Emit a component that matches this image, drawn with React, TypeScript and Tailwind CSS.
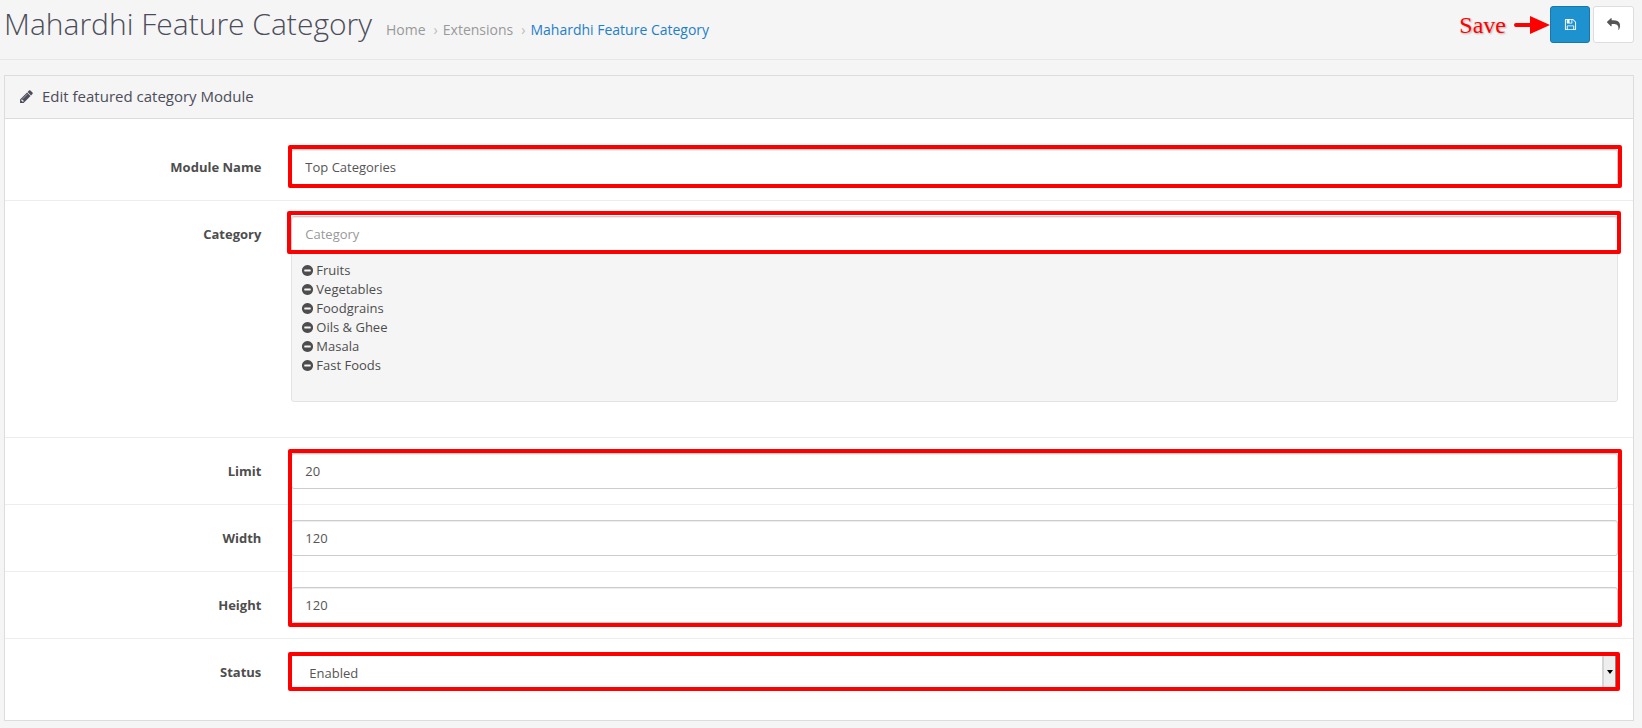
import type { ReactNode } from "react";

const PATHS = {
  save: "M512 1536h768v-384h-768v384zm896 0h128v-896q0-14-10-38.5t-20-34.5l-281-281q-10-10-34-20t-39-10v416q0 40-28 68t-68 28h-576q-40 0-68-28t-28-68v-416h-128v1280h128v-416q0-40 28-68t68-28h832q40 0 68 28t28 68v416zm-384-928v-320q0-13-9.5-22.5t-22.5-9.5h-192q-13 0-22.5 9.5t-9.5 22.5v320q0 13 9.5 22.5t22.5 9.5h192q13 0 22.5-9.5t9.5-22.5zm640 32v928q0 40-28 68t-68 28h-1344q-40 0-68-28t-28-68v-1344q0-40 28-68t68-28h928q40 0 88 20t76 48l280 280q28 28 48 76t20 88z",
  reply:
    "M1792 1120q0 166-127 451-3 7-10.5 24t-13.5 30-13 22q-12 17-28 17-15 0-23.5-10t-8.5-25q0-9 2.5-26.5t2.5-23.5q5-68 5-123 0-112-19.5-200.5t-54-153.5-89-112-111.5-78-134.5-48.5-148-24.5-159.5-7h-224v256q0 26-19 45t-45 19-45-19l-512-512q-19-19-19-45t19-45l512-512q19-19 45-19t45 19 19 45v256h224q713 0 875 403 53 134 53 333z",
  pencil:
    "M491 1536l91-91-235-235-91 91v107h128v128h107zm523-928q0-22-22-22-10 0-17 7l-542 542q-7 7-7 17 0 22 22 22 10 0 17-7l542-542q7-7 7-17zm-54-192l416 416-832 832h-416v-416zm683 96q0 53-37 90l-166 166-416-416 166-165q36-38 90-38 53 0 91 38l235 234q37 39 37 91z",
  minus:
    "M1344 960v-128q0-26-19-45t-45-19h-768q-26 0-45 19t-19 45v128q0 26 19 45t45 19h768q26 0 45-19t19-45zm320-64q0 209-103 385.5t-279.5 279.5-385.5 103-385.5-103-279.5-279.5-103-385.5 103-385.5 279.5-279.5 385.5-103 385.5 103 279.5 279.5 103 385.5z",
};

function Icon({ name, className }: { name: keyof typeof PATHS; className: string }) {
  return (
    <svg viewBox="0 0 1792 1792" fill="currentColor" aria-hidden="true" className={className}>
      <path d={PATHS[name]} />
    </svg>
  );
}

const FIELD =
  "block h-9 w-full rounded-[3px] border border-[#ccc] bg-white px-[13px] text-[13px] text-[#555] shadow-[inset_0_1px_1px_rgba(0,0,0,0.075)] outline-none placeholder:text-[#999]";

function Row({ id, label, children }: { id: string; label: string; children: ReactNode }) {
  return (
    <div className="flex border-t border-[#ededed] py-[15px] first:border-t-0">
      <label
        htmlFor={id}
        className="w-1/6 shrink-0 px-[15px] pt-[9px] text-right text-[13px] leading-[19px] font-bold text-[#4d4d4d]"
      >
        {label}
      </label>
      <div className="min-w-0 flex-1 px-[15px]">
        <div className="relative">{children}</div>
      </div>
    </div>
  );
}

function Highlight({ className }: { className: string }) {
  return (
    <div
      className={`pointer-events-none absolute z-10 rounded-[2px] border-4 border-[#fe0000] ${className}`}
    />
  );
}

const categories = ["Fruits", "Vegetables", "Foodgrains", "Oils & Ghee", "Masala", "Fast Foods"];

export default function App() {
  return (
    <div className="min-h-screen bg-[#f5f5f5] font-['Open_Sans','Noto_Sans',sans-serif] text-[13px] text-[#4d4d4d]">
      <header className="flex h-[60px] items-start justify-between border-b border-[#e7e7e7] pr-2 pl-1">
        <div className="flex items-baseline gap-[14px]">
          <h1 className="pt-[2px] text-[30px] leading-[44px] font-light text-[#4c4d5a]">
            Mahardhi Feature Category
          </h1>
          <nav aria-label="Breadcrumb">
            <ol className="flex items-baseline gap-2 text-[14px] text-[#999]">
              <li>
                <a href="#home">Home</a>
              </li>
              <li className="flex items-baseline gap-[5px]">
                <span className="text-[#bbb]">›</span>
                <a href="#extensions">Extensions</a>
              </li>
              <li className="flex items-baseline gap-[5px]">
                <span className="text-[#bbb]">›</span>
                <a href="#module" className="text-[#1e7fc8]">
                  Mahardhi Feature Category
                </a>
              </li>
            </ol>
          </nav>
        </div>
        <div className="flex items-center pt-[6px]">
          <span className="mr-2 font-['Liberation_Serif',serif] text-[24px] leading-9 text-[#fe0000] [text-shadow:1px_1px_2px_rgba(0,0,0,0.3)]">
            Save
          </span>
          <svg viewBox="0 0 36 18" className="h-[18px] w-9" aria-hidden="true">
            <path d="M2 9h18" stroke="#fe0000" strokeWidth="4" strokeLinecap="round" />
            <path d="M16 0L36 9L16 18z" fill="#fe0000" />
          </svg>
          <button
            type="button"
            aria-label="Save"
            className="flex h-[37px] w-10 items-center justify-center rounded-[3px] border border-[#1978ab] bg-[#1e91cf] text-white"
          >
            <Icon name="save" className="h-[13px] w-[13px]" />
          </button>
          <a
            href="#back"
            aria-label="Back"
            className="ml-[3px] flex h-[37px] w-[41px] items-center justify-center rounded-[3px] border border-[#ddd] bg-white text-[#555]"
          >
            <Icon name="reply" className="h-[13px] w-[13px]" />
          </a>
        </div>
      </header>

      <main className="pt-[15px] pr-2 pb-[7px] pl-1">
        <section className="border border-[#dcdcdc] bg-white">
          <div className="flex h-[43px] items-center gap-2 border-b border-[#dcdcdc] bg-[#f5f5f5] px-[14px] pb-[2px] text-[#4c4d5a]">
            <Icon name="pencil" className="h-[15px] w-[15px]" />
            <h2 className="text-[15px] leading-5">Edit featured category Module</h2>
          </div>

          <form className="py-[15px]" onSubmit={(e) => e.preventDefault()}>
            <Row id="name" label="Module Name">
              <input id="name" type="text" defaultValue="Top Categories" className={FIELD} />
              <Highlight className="-top-1 -right-1 -bottom-[3px] -left-[3px]" />
            </Row>
            <Row id="category" label="Category">
              <div className="relative">
                <input id="category" type="text" placeholder="Category" className={FIELD} />
                <Highlight className="-top-[5px] -right-[3px] -bottom-[2px] -left-1" />
              </div>
              <ul className="mb-5 h-[150px] overflow-auto rounded-[3px] border border-[#e3e3e3] bg-[#f5f5f5] px-[9px] py-2 text-[#4d4d4d]">
                {categories.map((c) => (
                  <li key={c} className="flex items-center gap-[2px] leading-[19px]">
                    <button type="button" aria-label={`Remove ${c}`}>
                      <Icon name="minus" className="h-[13px] w-[13px]" />
                    </button>
                    {c}
                  </li>
                ))}
              </ul>
            </Row>
            <Row id="limit" label="Limit">
              <input id="limit" type="text" defaultValue="20" className={FIELD} />
              <Highlight className="-top-1 -right-1 -left-[3px] h-[178px]" />
            </Row>
            <Row id="width" label="Width">
              <input id="width" type="text" defaultValue="120" className={FIELD} />
            </Row>
            <Row id="height" label="Height">
              <input id="height" type="text" defaultValue="120" className={FIELD} />
            </Row>
            <Row id="status" label="Status">
              <select
                id="status"
                defaultValue="1"
                className="block h-9 w-full appearance-none border border-[#ccc] bg-white px-[17px] pt-[3px] text-[13px] text-[#555] outline-none"
              >
                <option value="1">Enabled</option>
                <option value="0">Disabled</option>
              </select>
              <span className="pointer-events-none absolute top-0 right-[2px] flex h-9 w-[14px] items-center justify-center border-r border-l-2 border-[#888] border-l-[#d5d5d5] bg-[#eee]">
                <svg viewBox="0 0 6 4" className="h-1 w-[6px]" aria-hidden="true">
                  <path d="M0 0h6L3 4z" fill="#000" />
                </svg>
              </span>
              <Highlight className="-top-[2px] -right-[2px] -bottom-px -left-[3px]" />
            </Row>
          </form>
        </section>
      </main>
    </div>
  );
}
